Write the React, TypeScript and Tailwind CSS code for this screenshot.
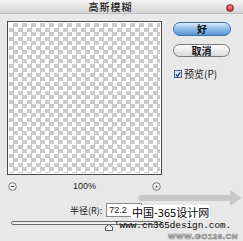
import React from "react";

const cjk = { fontFamily: '"Noto Sans CJK SC", "Liberation Sans", sans-serif' };

const Checker: React.FC = () => (
  <div className="w-[155px] h-[154px] border border-[#4a4a4a] bg-white p-px">
    <div className="w-full h-full bg-[conic-gradient(#cacaca_25%,#fff_0_50%,#cacaca_0_75%,#fff_0)] bg-[length:9px_9px]" />
  </div>
);

const ZoomIcon: React.FC<{ plus?: boolean }> = ({ plus }) => (
  <svg width="9" height="9" viewBox="0 0 9 9">
    <circle cx="4.5" cy="4.5" r="3.8" fill="#f4f4f4" stroke="#6a6a6a" strokeWidth="0.9" />
    {plus ? (
      <circle cx="4.5" cy="4.5" r="1" fill="#444" />
    ) : (
      <line x1="2.8" y1="4.5" x2="6.2" y2="4.5" stroke="#444" strokeWidth="1" />
    )}
  </svg>
);

export default function App() {
  return (
    <div
      className="relative w-[243px] h-[241px] overflow-hidden bg-[#e8e8e8] text-[#222]"
      style={cjk}
    >
      {/* title bar */}
      <div className="relative h-[14px] flex items-center justify-center bg-gradient-to-b from-[#f4f4f4] to-[#d6d6d6] border-b border-[#bdbdbd]">
        <span className="text-[10px] font-medium leading-none tracking-[1px] ml-[-22px]">高斯模糊</span>
        <div className="absolute right-[9px] top-[4px] w-[8px] h-[8px] rounded-full bg-[radial-gradient(circle_at_50%_35%,#f7a3a3,#c8282a_70%)] border border-[#8a3030]" />
      </div>

      <div className="flex">
        {/* left column */}
        <div className="ml-[7px] mt-[7px] w-[155px] flex flex-col">
          <Checker />
          <div className="flex items-center justify-between h-[10px] mt-[6px] px-[1px]">
            <ZoomIcon />
            <span className="text-[9px] leading-none" style={{ fontFamily: '"Liberation Sans", sans-serif' }}>100%</span>
            <ZoomIcon plus />
          </div>
          <div className="flex items-center mt-[12px] ml-[63px] h-[14px] whitespace-nowrap">
            <span className="text-[9px] leading-none">半径(R):</span>
            <div className="ml-[4px] w-[36px] h-[14px] shrink-0 bg-white border border-[#8a8a8a] text-[9px] leading-[12px] pl-[2px]" style={{ fontFamily: '"Liberation Sans", sans-serif' }}>
              72.2
            </div>
            <span className="ml-[4px] text-[9px] leading-none">像素</span>
          </div>
          <div className="relative mt-[4px] ml-[4px] h-[10px]">
            <div className="h-[4px] rounded-full border border-[#6a6a6a] bg-[#f0f0f0]" />
            <svg className="absolute left-[94px] top-[3px]" width="8" height="7" viewBox="0 0 8 7">
              <path d="M0.5 6.5 V3 L4 0.5 L7.5 3 V6.5 Z" fill="#fafafa" stroke="#555" strokeWidth="1" />
            </svg>
          </div>
        </div>

        {/* right column */}
        <div className="ml-[11px] mt-[8px] flex flex-col">
          <button className="w-[58px] h-[14px] rounded-full border border-[#3a6ea8] bg-gradient-to-b from-[#dcebfa] via-[#8dbbe9] to-[#5b97d6] text-[10px] leading-none font-bold text-[#111]">
            好
          </button>
          <button className="mt-[8px] w-[57px] h-[13px] rounded-full border border-[#7a7a7a] bg-gradient-to-b from-[#ffffff] to-[#d8d8d8] text-[10px] leading-none font-bold text-[#111]">
            取消
          </button>
          <div className="mt-[12px] flex items-center gap-[2px] ml-[1px]">
            <div className="w-[8px] h-[8px] border border-[#4a5f8a] bg-[#dfe8f7] flex items-center justify-center">
              <svg width="7" height="7" viewBox="0 0 7 7">
                <path d="M1 3.5 L3 5.5 L6.2 1" fill="none" stroke="#1b3f8a" strokeWidth="1.5" />
              </svg>
            </div>
            <span className="text-[10px] leading-none">预览(P)</span>
          </div>
        </div>
      </div>

      {/* watermark arrow */}
      <svg className="absolute left-[138px] top-[190px]" width="105" height="28" viewBox="0 0 105 28">
        <path d="M4 5 H92 L92 0 L104 8 L92 16 L92 11 H4 Q0 11 0 8 Q0 5 4 5 Z" fill="#b9b9b9" opacity="0.7" />
        <text x="46" y="27" fontSize="16" fontWeight="bold" fill="#c6c6c6" opacity="0.8" fontFamily="Liberation Sans, sans-serif">365</text>
      </svg>
      <div className="absolute left-[131px] top-[205px] bg-white px-[1px] text-[11px] leading-[14px] text-black whitespace-nowrap">
        中国-365设计网
      </div>
      <div
        className="absolute left-[114px] top-[221px] text-[9.3px] leading-[10px] text-black whitespace-nowrap"
        style={{ fontFamily: '"Liberation Mono", monospace' }}
      >
        'www.cn365design.com.
      </div>
      <div
        className="absolute left-[168px] top-[233px] text-[8px] leading-[8px] font-bold text-white tracking-[0.5px] whitespace-nowrap [-webkit-text-stroke:0.6px_#7a7a7a]"
        style={{ fontFamily: '"Liberation Sans", sans-serif' }}
      >
        WWW.GO126.CN
      </div>
    </div>
  );
}
